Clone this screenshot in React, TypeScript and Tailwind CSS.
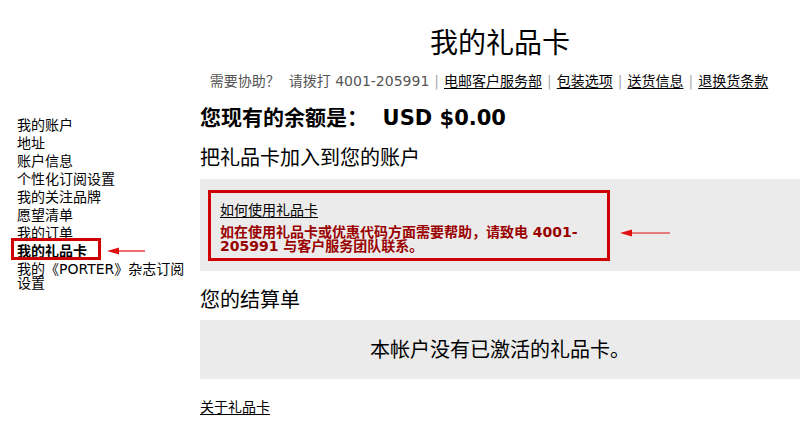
import React from 'react';

const cjk = { fontFamily: '"DejaVu Sans", "Noto Sans CJK SC", sans-serif' };

const navItems = ['我的账户', '地址', '账户信息', '个性化订阅设置', '我的关注品牌', '愿望清单', '我的订单'];

const helpLinks = ['电邮客户服务部', '包装选项', '送货信息', '退换货条款'];

const Arrow: React.FC<{ width: number }> = ({ width }) => (
  <svg width={width} height="10" viewBox={`0 0 ${width} 10`} className="block">
    <line x1="8" y1="5" x2={width} y2="5" stroke="#e01010" strokeWidth="1.2" />
    <polygon points="0,5 12,1.5 12,8.5" fill="#e01010" />
  </svg>
);

const App: React.FC = () => {
  return (
    <div className="w-[807px] h-[444px] bg-white text-black overflow-hidden" style={cjk}>
      <div className="pl-[200px] w-[800px]">
        <h1 className="pt-[27px] text-center text-[28px] leading-[34px] font-normal">我的礼品卡</h1>
        <div className="mt-[11px] flex justify-center items-center text-[14px] leading-[18px] text-[#555] pr-[22px]">
          <span>需要协助？&nbsp;&nbsp;请拨打 4001-205991</span>
          {helpLinks.map((l) => (
            <React.Fragment key={l}>
              <span className="mx-[5px] text-[#aaa]">|</span>
              <a className="text-black underline underline-offset-2">{l}</a>
            </React.Fragment>
          ))}
        </div>
      </div>

      <div className="flex mt-[9px]">
        <div className="w-[200px] pl-[17px] pt-[19px]">
          <ul className="text-[14px] leading-[14px] flex flex-col gap-[4px]">
            {navItems.map((n) => (
              <li key={n}>{n}</li>
            ))}
            <li className="relative">
              <span className="font-bold">我的礼品卡</span>
              <div className="absolute left-[-6px] top-[-6px] w-[90px] h-[22px] border-[3px] border-[#d00000]" />
              <div className="absolute left-[90px] top-[2px]">
                <Arrow width={38} />
              </div>
            </li>
            <li>
              我的《PORTER》杂志订阅
              <br />
              设置
            </li>
          </ul>
        </div>

        <div className="w-[600px]">
          <div className="mt-[6px] text-[21px] leading-[26px] font-bold">
            您现有的余额是：&nbsp;&nbsp;USD $0.00
          </div>
          <div className="mt-[14px] text-[20px] leading-[26px]">把礼品卡加入到您的账户</div>

          <div className="mt-[8px] bg-[#ebebeb] h-[92px] pt-[11px] pl-[8px] flex items-start">
            <div className="w-[402px] h-[71px] border-[3px] border-[#d00000] pl-[9px] pt-[5px]">
              <a className="text-[14px] leading-[18px] underline underline-offset-2">如何使用礼品卡</a>
              <div className="mt-[3px] text-[14px] leading-[14px] font-bold text-[#9a0000]">
                如在使用礼品卡或优惠代码方面需要帮助，请致电 4001-
                <br />
                205991 与客户服务团队联系。
              </div>
            </div>
            <div className="ml-[10px] mt-[38px]">
              <Arrow width={50} />
            </div>
          </div>

          <div className="mt-[16px] text-[20px] leading-[26px]">您的结算单</div>
          <div className="mt-[7px] bg-[#ebebeb] h-[59px] flex items-center justify-center text-[20px]">
            本帐户没有已激活的礼品卡。
          </div>
          <a className="block mt-[19px] text-[14px] leading-[18px] underline underline-offset-2">关于礼品卡</a>
        </div>
      </div>
    </div>
  );
};

export default App;
